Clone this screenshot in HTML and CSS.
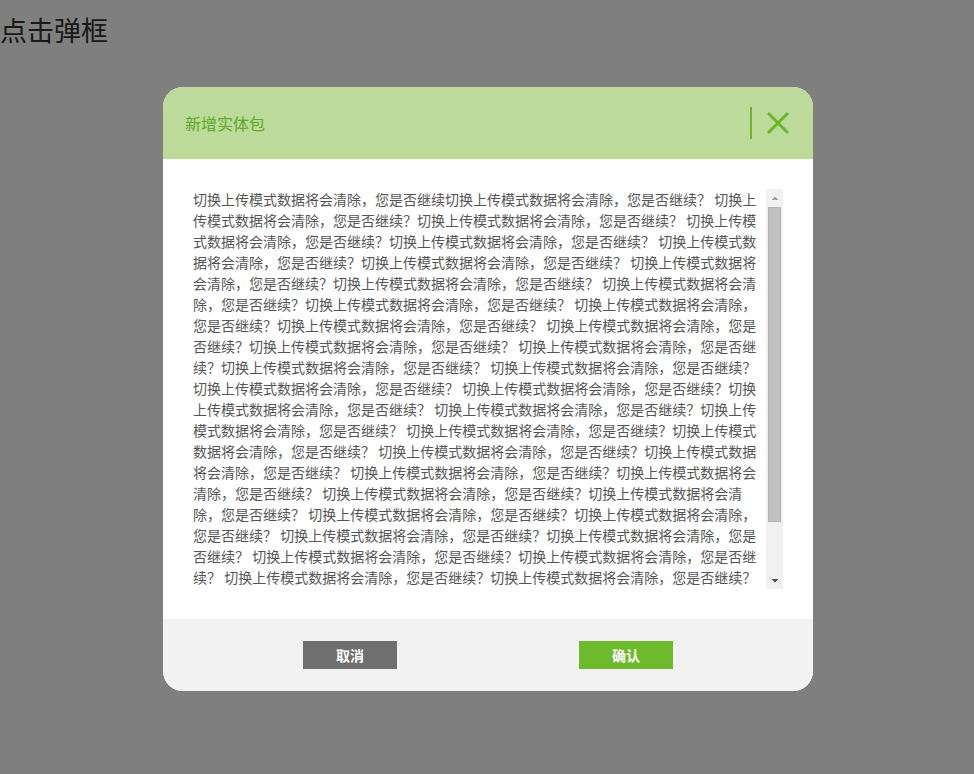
FILE: index.html
```html
<!DOCTYPE html>
<html lang="zh-CN">
<head>
<meta charset="utf-8">
<title>点击弹框</title>
<link rel="stylesheet" href="styles.css">
</head>
<body>
<h1 class="page-title">点击弹框</h1>
<div class="overlay">
  <div class="dialog">
    <div class="dialog-header">
      <span class="dialog-title">新增实体包</span>
      <div class="close-area">
        <span class="divider"></span>
        <svg class="close-icon" width="24" height="24" viewBox="0 0 24 24">
          <path d="M2 2 L22 22 M22 2 L2 22" stroke="#6cb52d" stroke-width="3" fill="none"/>
        </svg>
      </div>
    </div>
    <div class="dialog-body">
      <div class="scroll-box">
        <div class="scroll-text">切换上传模式数据将会清除，您是否继续切换上传模式数据将会清除，您是否继续？ 切换上传模式数据将会清除，您是否继续？切换上传模式数据将会清除，您是否继续？ 切换上传模式数据将会清除，您是否继续？切换上传模式数据将会清除，您是否继续？ 切换上传模式数据将会清除，您是否继续？切换上传模式数据将会清除，您是否继续？ 切换上传模式数据将会清除，您是否继续？切换上传模式数据将会清除，您是否继续？ 切换上传模式数据将会清除，您是否继续？切换上传模式数据将会清除，您是否继续？ 切换上传模式数据将会清除，您是否继续？切换上传模式数据将会清除，您是否继续？ 切换上传模式数据将会清除，您是否继续？切换上传模式数据将会清除，您是否继续？ 切换上传模式数据将会清除，您是否继续？切换上传模式数据将会清除，您是否继续？ 切换上传模式数据将会清除，您是否继续？切换上传模式数据将会清除，您是否继续？ 切换上传模式数据将会清除，您是否继续？切换上传模式数据将会清除，您是否继续？ 切换上传模式数据将会清除，您是否继续？切换上传模式数据将会清除，您是否继续？ 切换上传模式数据将会清除，您是否继续？切换上传模式数据将会清除，您是否继续？ 切换上传模式数据将会清除，您是否继续？切换上传模式数据将会清除，您是否继续？ 切换上传模式数据将会清除，您是否继续？切换上传模式数据将会清除，您是否继续？ 切换上传模式数据将会清除，您是否继续？切换上传模式数据将会清除，您是否继续？ 切换上传模式数据将会清除，您是否继续？切换上传模式数据将会清除，您是否继续？ 切换上传模式数据将会清除，您是否继续？切换上传模式数据将会清除，您是否继续？ 切换上传模式数据将会清除，您是否继续？切换上传模式数据将会清除，您是否继续？ 切换上传模式数据将会清除，您是否继续？切换上传模式数据将会清除，您是否继续？</div>
        <div class="scrollbar">
          <span class="sb-arrow sb-up"></span>
          <span class="sb-track"><span class="sb-thumb"></span></span>
          <span class="sb-arrow sb-down"></span>
        </div>
      </div>
    </div>
    <div class="dialog-footer">
      <button class="btn btn-cancel">取消</button>
      <button class="btn btn-ok">确认</button>
    </div>
  </div>
</div>
</body>
</html>
```

FILE: styles.css
```css
html, body {
  margin: 0;
  padding: 0;
  height: 100%;
  background: #ffffff;
  font-family: "Noto Sans CJK SC", "Noto Sans", sans-serif;
}

.page-title {
  margin: 0;
  font-size: 27px;
  font-weight: normal;
  line-height: 60px;
  color: #333333;
}

.overlay {
  position: fixed;
  inset: 0;
  background: rgba(0, 0, 0, 0.5);
  display: flex;
  justify-content: center;
  align-items: flex-start;
  padding: 87px 0 0 2px;
}

.dialog {
  width: 650px;
  border-radius: 20px;
  overflow: hidden;
  background: #ffffff;
  display: flex;
  flex-direction: column;
}

.dialog-header {
  height: 72px;
  background: #bcda99;
  display: flex;
  align-items: center;
  justify-content: space-between;
  padding: 0 23px 0 22px;
}

.dialog-title {
  font-size: 16px;
  color: #5fa82a;
}

.close-area {
  display: flex;
  align-items: center;
  gap: 14px;
}

.divider {
  width: 2px;
  height: 32px;
  background: #6cb52d;
}

.close-icon {
  display: block;
}

.dialog-body {
  padding: 30px;
}

.scroll-box {
  height: 400px;
  display: flex;
}

.scroll-text {
  flex: 1;
  min-width: 0;
  overflow: hidden;
  font-size: 14px;
  line-height: 21px;
  color: #555555;
}

.scrollbar {
  width: 17px;
  flex: none;
  display: flex;
  flex-direction: column;
  background: #f1f1f1;
}

.sb-arrow {
  height: 17px;
  flex: none;
  background-repeat: no-repeat;
  background-position: center;
  background-size: 8px 4px;
}

.sb-up {
  background-image: conic-gradient(from 136deg at 50% 0, #a3a3a3 88deg, transparent 0);
}

.sb-down {
  background-image: conic-gradient(from -44deg at 50% 100%, #505050 88deg, transparent 0);
}

.sb-track {
  flex: 1;
  display: flex;
  flex-direction: column;
  padding: 1px 2px 0;
}

.sb-thumb {
  height: 315px;
  background: #c1c1c1;
  box-shadow: inset 0 0 0 1px #b4b4b4;
}

.dialog-footer {
  height: 72px;
  background: #f2f2f2;
  display: flex;
  align-items: center;
  justify-content: space-between;
  padding: 0 140px;
}

.btn {
  width: 94px;
  height: 28px;
  border: none;
  font-family: "Noto Sans CJK SC", sans-serif;
  font-size: 14px;
  font-weight: bold;
  color: #ffffff;
  cursor: pointer;
  padding: 0;
}

.btn-cancel {
  background: #6f6f6f;
}

.btn-ok {
  background: #6dba2c;
}
```
